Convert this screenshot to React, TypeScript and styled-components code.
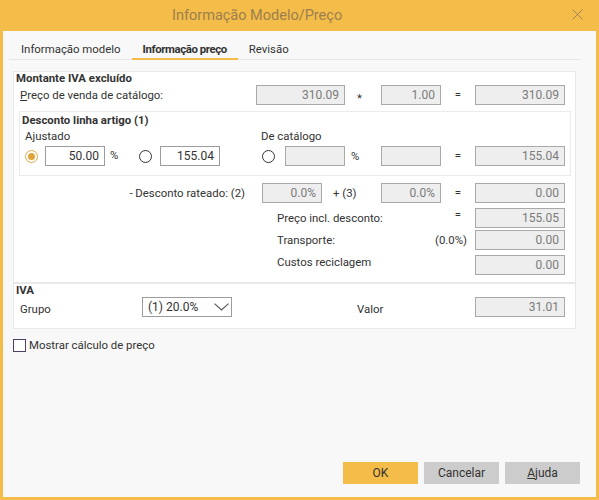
import { type FC, type ReactNode } from 'react';
import styled, { createGlobalStyle } from 'styled-components';

// ── Theme values ───────────────────────────────────────────────────────────────

const ORANGE = '#f4bc48';
const TEXT = '#333333';

const GlobalStyle = createGlobalStyle`
  html, body {
    margin: 0;
    padding: 0;
    background: #f8f8f8;
  }
  body {
    font-family: Roboto, 'Noto Sans', 'Liberation Sans', sans-serif;
    font-size: 11.4px;
    color: ${TEXT};
  }
`;

// ── Window chrome ──────────────────────────────────────────────────────────────

const Window = styled.div`
  width: 599px;
  height: 500px;
  box-sizing: border-box;
  display: flex;
  flex-direction: column;
  background: ${ORANGE};
  padding: 0 3px 3px 3px;
`;

const TitleBar = styled.div`
  height: 31px;
  flex-shrink: 0;
  display: flex;
  align-items: center;
`;

const Title = styled.div`
  flex: 1;
  padding-left: 169px;
  font-size: 14.5px;
  color: #9c7f50;
`;

const CloseButton = styled.div`
  display: flex;
  margin-right: 13px;
  margin-bottom: 2px;
`;

const Body = styled.div`
  flex: 1;
  display: flex;
  flex-direction: column;
  background: #f8f8f8;
`;

// ── Tabs ───────────────────────────────────────────────────────────────────────

const TabBar = styled.div`
  height: 29px;
  box-sizing: border-box;
  margin: 0 16px 0 6px;
  padding-left: 1px;
  display: flex;
  align-items: flex-end;
  border-bottom: 1px solid #e6e6e6;
`;

const Tab = styled.div<{ $active?: boolean }>`
  padding: 0 11px;
  line-height: 18px;
  margin-bottom: -1px;
  border-bottom: 2px solid ${(p) => (p.$active ? ORANGE : 'transparent')};
  font-weight: ${(p) => (p.$active ? 700 : 400)};
  letter-spacing: ${(p) => (p.$active ? '-0.4px' : '0')};
  color: ${TEXT};
`;

// ── Panels ─────────────────────────────────────────────────────────────────────

const Panel = styled.div<{ $top?: number }>`
  margin: ${(p) => p.$top ?? 0}px 20px 0 10px;
  background: #ffffff;
  border: 1px solid #e8e8e8;
  display: flex;
  flex-direction: column;
  padding-bottom: ${(p) => (p.$top ? 7 : 11)}px;
`;

const SubPanel = styled.div`
  margin: 6px 4px 0 5px;
  border: 1px solid #ebebeb;
  padding: 1px 0 9px 0;
  display: flex;
  flex-direction: column;
`;

const Heading = styled.div`
  font-weight: 700;
  line-height: 13px;
  height: 13px;
  padding-left: 2px;
`;

const SubHeading = styled.div`
  font-weight: 700;
  line-height: 14px;
  padding-left: 2px;
`;

// ── Grid rows ──────────────────────────────────────────────────────────────────

const Row = styled.div<{ $cols: string; $gap?: number; $align?: string; $pr?: number }>`
  display: grid;
  grid-template-columns: ${(p) => p.$cols};
  height: 20px;
  align-items: ${(p) => p.$align ?? 'center'};
  margin-top: ${(p) => p.$gap ?? 0}px;
  padding-right: ${(p) => p.$pr ?? 10}px;
`;

const LabelRow = styled.div`
  display: grid;
  grid-template-columns: 241px 1fr;
  line-height: 14px;
  margin-top: 2px;
`;

const Label = styled.div<{ $indent?: number; $right?: boolean; $dy?: number }>`
  padding-left: ${(p) => p.$indent ?? 0}px;
  padding-top: ${(p) => p.$dy ?? 0}px;
  text-align: ${(p) => (p.$right ? 'right' : 'left')};
  white-space: nowrap;
  line-height: 14px;
`;

const SplitLabel = styled.div`
  display: flex;
  justify-content: space-between;
  padding-right: 8px;
  white-space: nowrap;
`;

const Symbol = styled.div<{ $left?: number; $dy?: number }>`
  text-align: ${(p) => (p.$left === undefined ? 'center' : 'left')};
  padding-left: ${(p) => p.$left ?? 0}px;
  padding-top: ${(p) => Math.max(p.$dy ?? 0, 0)}px;
  padding-bottom: ${(p) => Math.max(-(p.$dy ?? 0), 0)}px;
  white-space: nowrap;
`;

const Field = styled.div<{ $disabled?: boolean }>`
  box-sizing: border-box;
  height: 20px;
  border: 1px solid ${(p) => (p.$disabled ? '#a9a9a9' : '#9c9c9c')};
  background: ${(p) => (p.$disabled ? '#eeeeee' : '#ffffff')};
  color: ${(p) => (p.$disabled ? '#7b7b7b' : TEXT)};
  text-align: right;
  padding-right: 5px;
  line-height: 18px;
  font-size: 12px;
`;

const Radio = styled.span<{ $checked?: boolean; $offset?: number }>`
  box-sizing: border-box;
  width: 13px;
  height: 13px;
  margin-left: ${(p) => p.$offset ?? 0}px;
  border-radius: 50%;
  border: 1px solid ${(p) => (p.$checked ? '#e4aa45' : '#333')};
  background: #fff;
  display: flex;
  align-items: center;
  justify-content: center;

  &::after {
    content: '';
    width: 7px;
    height: 7px;
    border-radius: 50%;
    background: ${(p) => (p.$checked ? '#e2a43a' : 'transparent')};
  }
`;

const Select = styled.div`
  box-sizing: border-box;
  height: 20px;
  border: 1px solid #9c9c9c;
  background: #fff;
  display: flex;
  align-items: center;
  justify-content: space-between;
  padding: 0 2px 0 5px;
  font-size: 12px;
`;

// ── Checkbox / footer ──────────────────────────────────────────────────────────

const CheckRow = styled.div`
  display: flex;
  align-items: center;
  gap: 3px;
  margin: 10px 0 0 10px;
  line-height: 13px;
`;

const CheckBox = styled.span`
  box-sizing: border-box;
  width: 13px;
  height: 13px;
  border: 1px solid #4f4066;
  background: #fff;
`;

const Footer = styled.div`
  margin-top: auto;
  display: flex;
  justify-content: flex-end;
  gap: 6px;
  padding: 0 16px 13px 0;
`;

const Button = styled.div<{ $primary?: boolean }>`
  width: 75px;
  height: 22px;
  line-height: 22px;
  text-align: center;
  font-size: 12px;
  background: ${(p) => (p.$primary ? ORANGE : '#cccccc')};
  color: ${TEXT};
`;

// ── Icons ──────────────────────────────────────────────────────────────────────

const CloseIcon: FC = () => (
  <svg width="11" height="11" viewBox="0 0 11 11">
    <path d="M0.5 0.5 L10.5 10.5 M10.5 0.5 L0.5 10.5" stroke="#9c8458" strokeWidth="1" fill="none" />
  </svg>
);

const Chevron: FC = () => (
  <svg width="15" height="8" viewBox="0 0 15 8">
    <path d="M0.5 0.7 L7.5 7 L14.5 0.7" stroke="#555" strokeWidth="1.1" fill="none" />
  </svg>
);

// ── Columns ────────────────────────────────────────────────────────────────────

const COLS_PRICE = '1fr 89px 36px 60px 34px 90px';
const COLS_DISCOUNT = '25px 60px 34px 21px 60px 41px 24px 60px 36px 60px 34px 90px';
const COLS_RATEADO = '231px 17px 60px 59px 60px 34px 90px';
const COLS_NET = '263px 1fr 34px 90px';
const COLS_TAIL = '263px 1fr 90px';
const COLS_IVA = '128px 90px 125px 1fr 90px';

const Empty: FC<{ children?: ReactNode }> = ({ children }) => <div>{children}</div>;

// ── App ────────────────────────────────────────────────────────────────────────

const App: FC = () => (
  <>
    <GlobalStyle />
    <Window>
      <TitleBar>
        <Title>Informação Modelo/Preço</Title>
        <CloseButton>
          <CloseIcon />
        </CloseButton>
      </TitleBar>

      <Body>
        <TabBar>
          <Tab>Informação modelo</Tab>
          <Tab $active>Informação preço</Tab>
          <Tab>Revisão</Tab>
        </TabBar>

        <Panel $top={11}>
          <Heading>Montante IVA excluído</Heading>
          <Row $cols={COLS_PRICE}>
            <Label $indent={6}>
              <u>P</u>reço de venda de catálogo:
            </Label>
            <Field $disabled>310.09</Field>
            <Symbol $dy={5} $left={12}>*</Symbol>
            <Field $disabled>1.00</Field>
            <Symbol $dy={-2}>=</Symbol>
            <Field $disabled>310.09</Field>
          </Row>

          <SubPanel>
            <SubHeading>Desconto linha artigo (1)</SubHeading>
            <LabelRow>
              <Label $indent={5}>Ajustado</Label>
              <Label>De catálogo</Label>
            </LabelRow>
            <Row $cols={COLS_DISCOUNT} $gap={3} $pr={4}>
              <Radio $checked $offset={5} />
              <Field>50.00</Field>
              <Symbol $left={5} $dy={-3}>%</Symbol>
              <Radio />
              <Field>155.04</Field>
              <Empty />
              <Radio $offset={1} />
              <Field $disabled />
              <Symbol $left={6}>%</Symbol>
              <Field $disabled />
              <Symbol $dy={-2}>=</Symbol>
              <Field $disabled>155.04</Field>
            </Row>
          </SubPanel>

          <Row $cols={COLS_RATEADO} $gap={7}>
            <Label $right>- Desconto rateado: (2)</Label>
            <Empty />
            <Field $disabled>0.0%</Field>
            <Symbol $left={11}>+ (3)</Symbol>
            <Field $disabled>0.0%</Field>
            <Symbol $dy={-2}>=</Symbol>
            <Field $disabled>0.00</Field>
          </Row>

          <Row $cols={COLS_NET} $gap={4}>
            <Empty />
            <Label>Preço incl. desconto:</Label>
            <Symbol $dy={-7}>=</Symbol>
            <Field $disabled>155.05</Field>
          </Row>

          <Row $cols={COLS_TAIL} $gap={3}>
            <Empty />
            <SplitLabel>
              <span>Transporte:</span>
              <span>(0.0%)</span>
            </SplitLabel>
            <Field $disabled>0.00</Field>
          </Row>

          <Row $cols={COLS_TAIL} $gap={5} $align="start">
            <Empty />
            <Label>Custos reciclagem</Label>
            <Field $disabled>0.00</Field>
          </Row>
        </Panel>

        <Panel>
          <Heading>IVA</Heading>
          <Row $cols={COLS_IVA}>
            <Label $indent={6} $dy={3}>Grupo</Label>
            <Select>
              <span>(1) 20.0%</span>
              <Chevron />
            </Select>
            <Empty />
            <Label $dy={3}>Valor</Label>
            <Field $disabled>31.01</Field>
          </Row>
        </Panel>

        <CheckRow>
          <CheckBox />
          <span>Mostrar cálculo de preço</span>
        </CheckRow>

        <Footer>
          <Button $primary>OK</Button>
          <Button>Cancelar</Button>
          <Button>
            <u>A</u>juda
          </Button>
        </Footer>
      </Body>
    </Window>
  </>
);

export default App;
